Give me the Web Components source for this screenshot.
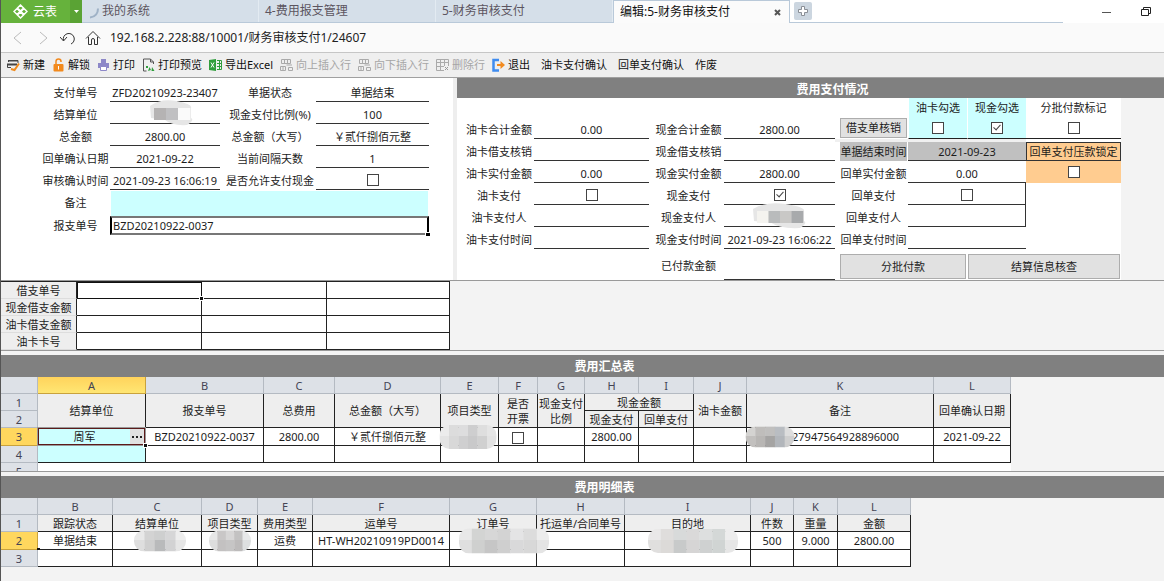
<!DOCTYPE html>
<html lang="zh-CN">
<head>
<meta charset="UTF-8">
<title>财务审核支付</title>
<style>
  body {
    margin: 0;
    min-height: 100vh;
    box-sizing: border-box;
    border-left: 1px solid #555;
    background: #f3f3f3;
    color: #1c1c1c;
    font: 11px/16px "Noto Sans", "Noto Sans CJK SC", sans-serif;
  }
</style>
</head>
<body>
<yb-app></yb-app>

<script>
// small helper, every element here renders once
class BaseElement extends HTMLElement {
  constructor() {
    super();
    this.attachShadow({ mode: 'open' });
  }
  connectedCallback() {
    this.shadowRoot.innerHTML = this.render();
  }
}

const checkboxCss = `
  input[type=checkbox] {
    appearance: none;
    position: relative;
    flex: none;
    width: 12px;
    height: 12px;
    margin: 0;
    border: 1px solid #444;
    background: #fff;
  }
  input[type=checkbox]:checked::after {
    content: "";
    position: absolute;
    left: 3px;
    top: 0;
    width: 3px;
    height: 6px;
    border: solid #444;
    border-width: 0 1px 1px 0;
    transform: rotate(42deg);
  }
`;

const buttonCss = `
  button {
    font: inherit;
    color: inherit;
    padding: 0;
    border: 0;
    background: none;
    white-space: nowrap;
  }
`;

const icons = {
  new: `<path d="M1.500 4V2.500h9.500V5M.5 9.500V6.500H10M.5 9.500H4" fill="none" stroke="#444"/><path d="M1 2h10v1.500H1zM0 5.500h10v2H0z" fill="#444"/><path d="M4 11l3.500 1L12 5.500" fill="none" stroke="#f08a1c" stroke-width="2"/>`,
  unlock: `<path d="M4 6V3.500a2.500 2.500 0 0 1 5 0V4" fill="none" stroke="#f28a1e" stroke-width="1.500"/><rect x="1.500" y="6" width="10" height="7.500" rx="1" fill="#f28a1e"/><path d="M6 8h1v3.500H6z" fill="#fff"/>`,
  print: `<path d="M4 1h5v4H4zM1 5h11v5H1z" fill="#8d88c8"/><path d="M3.500 8.500h6v4h-6z" fill="#fff" stroke="#8d88c8"/>`,
  preview: `<path d="M11.500 6V4l-3-3h-7v12h3" fill="none" stroke="#555"/><path d="M8.500 1v3h3" fill="none" stroke="#555"/><path d="M6 13l1.500-4 1.500 3zM10 9l2.500 4h-3zM4 8h2v2H4z" fill="#2f9e3c"/>`,
  excel: `<path d="M0 2l7-1v12l-7-1z" fill="#2f9e3c"/><path d="M2 4.500l3 5M5 4.500l-3 5" stroke="#fff" fill="none"/><path d="M8 2.500h4.500v9H8M10.500 3v8M8 5.500h4M8 8.500h4" stroke="#2f9e3c" fill="none"/>`,
  up: `<path d="M1.500 1.500h9v4h-9zM4.500 1v4M7.500 1v4M.5 8.500h5v4h-5zM3 8v4M6.500 7H12M8.500 9.500h4v3h-4z" fill="none" stroke="#aaa"/>`,
  down: `<path d="M1.500 1.500h9v4h-9zM4.500 1v4M7.500 1v4M.5 8.500h5v4h-5zM3 8v4M6.500 7H12M8.500 9.500h4v3h-4z" fill="none" stroke="#aaa"/>`,
  del: `<path d="M.5 1.500h12v11H.5zM.5 4.500h12M.5 8.500h12M4.500 1.500v11M8.500 1.500v11" fill="none" stroke="#aaa"/><path d="M8 8h5v5H8z" fill="#efefef"/><path d="M9 9l3 3M12 9l-3 3" stroke="#999"/>`,
  exit: `<path d="M7 2H1.500v10.500H7" fill="none" stroke="#3f8cf0" stroke-width="2.500"/><path d="M5 6h3.500V3l4.500 4-4.500 4V8H5z" fill="#f28a1e"/>`
};

class TabStrip extends BaseElement {
  render() {
    return `
      <style>
        :host { display: flex; height: 23px; background: #fff; font-size: 12px; }
        ${buttonCss}
        .logo {
          display: flex; align-items: center; gap: 5px; box-sizing: border-box; width: 69px; padding-left: 12px;
          background: #66b23c; color: #fff;
        }
        .drop { width: 12px; background: #5aa334; color: #fff; display: flex; align-items: center; justify-content: center; }
        nav { display: flex; flex: 0 1 981px; border-bottom: 1px solid #b9c9d9; }
        .tab {
          display: flex; align-items: center; flex: 0 1 177px; box-sizing: border-box; padding: 0 8px 0 6px;
          border-right: 1px solid #e3ebf2; background: #d5dfe9; color: #5c5560; text-decoration: none; white-space: nowrap;
        }
        .tab:first-child { gap: 2px; }
        .tab.active {
          justify-content: space-between; margin-bottom: -1px; background: #fbfbfb; color: #111;
          border: 1px solid #b9c9d9; border-bottom: 0;
        }
        .add {
          display: flex; align-items: center; justify-content: center; width: 18px; height: 18px; margin: 2px 4px;
          border-radius: 2px; background: #ccd6e0;
        }
        .window { display: flex; gap: 30px; align-items: center; margin-left: auto; padding-right: 13px; }
        svg { display: block; }
      </style>
      <button class="logo"><svg width="15" height="15" viewBox="0 0 15 15" fill="none" stroke="#fff" stroke-width="1.500"><path d="M7.500 1l3 3-3 3-3-3zM7.500 8l3 3-3 3-3-3zM4 4.500l3 3-3 3-3-3zM11 4.500l3 3-3 3-3-3z"/></svg>云表</button>
      <button class="drop" aria-label="菜单"><svg width="5" height="3"><path d="M0 0h5L2.500 3z" fill="#fff"/></svg></button>
      <nav>
        <a class="tab" href="#"><svg width="12" height="16" viewBox="0 0 12 16"><path d="M2 14.500q8-1 8-9" fill="none" stroke="#9fb2c6" stroke-width="2"/></svg>我的系统</a>
        <a class="tab" href="#">4-费用报支管理</a>
        <a class="tab" href="#">5-财务审核支付</a>
        <a class="tab active" href="#">编辑:5-财务审核支付
          <svg width="7" height="7" viewBox="0 0 7 7"><path d="M1 1l5 5M6 1L1 6" stroke="#555" stroke-width="2"/></svg>
        </a>
        <button class="add" aria-label="新标签页"><svg width="10" height="10" viewBox="0 0 10 10"><path d="M3.500.5h3v3h3v3h-3v3h-3v-3h-3v-3h3z" fill="#fff" stroke="#8a8f96"/></svg></button>
      </nav>
      <div class="window">
        <button aria-label="最小化"><svg width="9" height="10"><path d="M0 5.500h9" stroke="#555"/></svg></button>
        <button aria-label="还原"><svg width="10" height="10" viewBox="0 0 10 10"><path d="M.5 2.500h7v6h-7zM2.500 2V.5h7v6H8" fill="none" stroke="#222"/></svg></button>
      </div>`;
  }
}

class AddressBar extends BaseElement {
  render() {
    return `
      <style>
        :host { display: flex; align-items: center; height: 29px; padding-left: 9px; border-bottom: 1px solid #c6c6c6; background: #fafafa; }
        ${buttonCss}
        button { display: flex; width: 16px; margin-right: 9px; justify-content: center; }
        svg { display: block; }
        input { flex: 1; min-width: 0; padding: 0; border: 0; outline: 0; background: none; color: #222; font: inherit; font-size: 12px; }
      </style>
      <button aria-label="后退"><svg width="16" height="16" fill="none" stroke="#bbb"><path d="M11 2L4 8l7 6"/></svg></button>
      <button aria-label="前进"><svg width="16" height="16" fill="none" stroke="#bbb"><path d="M5 2l7 6-7 6"/></svg></button>
      <button aria-label="刷新"><svg width="16" height="16" fill="none" stroke="#333"><path d="M0 7l3.500 4L7 7M3.500 10.500a5.500 5.500 0 1 1 7.500 3.500"/></svg></button>
      <button aria-label="主页"><svg width="16" height="16" fill="none" stroke="#333"><path d="M1 8.500L8 1.500l7 7M3.500 7v7.500h3V10a1.500 1.500 0 0 1 3 0v4.500h3V7"/></svg></button>
      <input aria-label="地址" value="192.168.2.228:88/10001/财务审核支付1/24607">`;
  }
}

class ToolButton extends BaseElement {
  render() {
    const icon = icons[this.getAttribute('icon')];
    return `
      <style>
        :host { display: flex; }
        ${buttonCss}
        button { display: flex; align-items: center; gap: 3px; color: #111; }
        button:disabled { color: #a6a6a6; }
        :host(:not([icon])) button { margin-left: 4px; }
      </style>
      <button ${this.hasAttribute('disabled') ? 'disabled' : ''}>${icon ? `<svg width="13" height="14" viewBox="0 0 13 14">${icon}</svg>` : ''}<slot></slot></button>`;
  }
}

class SectionTitle extends BaseElement {
  render() {
    return `
      <style>
        :host {
          display: block; height: var(--title-height, 22px); padding-left: 44px; background: #808080; color: #fff;
          font-size: 12px; font-weight: 700; line-height: 23px; text-align: center;
        }
      </style>
      <slot></slot>`;
  }
}

// mosaic patch over private data: tones are the colours of its blocks, left to right
class PixelMask extends BaseElement {
  render() {
    const w = +this.getAttribute('w');
    const h = +this.getAttribute('h');
    const tones = this.getAttribute('tones').split(' ');
    // a brushed mask is blocks all over, otherwise they sit in a band across a pale blob
    const full = this.hasAttribute('full');
    const inset = full ? 0 : 5;
    const top = full ? 0 : 8;
    const step = (w - inset * 2) / tones.length;
    const blocks = tones.map((tone, i) => `
      <rect x="${inset + i * step}" y="${top}" width="${step + 0.3}" height="${full ? h : 12}" fill="#${tone}"/>
      ${full ? `<rect x="${inset + i * step}" y="0" width="${step + 0.3}" height="${h / 2 - 1}" fill="#fff" opacity="${i % 2 ? 0.1 : 0.3}"/>` : ''}`).join('');
    const blob = full ? '' : `<path d="M1 6Q${w * 0.25}-2 ${w * 0.6} 1T${w - 4} 8V18Q${w} 20 ${w - 8} ${h - 1}Q${w * 0.5} ${h} ${w * 0.35} 20L2 18z" fill="#e6e6e6"/>`;
    return `
      <style>
        :host { position: absolute; z-index: 1; left: calc(50% + ${this.getAttribute('dx') || 0}px); top: 50%; transform: translate(-50%, -50%); }
        svg { display: block; }
        :host([full]) svg { border-radius: 10px; }
      </style>
      <svg width="${w}" height="${h}">${blob}${blocks}</svg>`;
  }
}

class FormField extends BaseElement {
  render() {
    const value = this.getAttribute('value') || '';
    const control = this.hasAttribute('check')
      ? `<input id="f" type="checkbox" ${this.getAttribute('check') === 'on' ? 'checked' : ''}>`
      : `<input id="f" class="text" value="${value}">`;
    return `
      <style>
        :host { display: grid; grid-template-columns: subgrid; grid-column: span 2; }
        label { display: flex; align-items: center; justify-content: center; padding: 3px 0 0 4px; white-space: nowrap; }
        .value {
          position: relative; grid-column: 2 / -1; display: flex; align-items: center; justify-content: center;
          padding-top: 3px; border-bottom: 1px solid #333;
        }
        .text {
          box-sizing: border-box; width: 100%; height: 100%; min-width: 0; padding: 0 2px; border: 0; outline: 0;
          background: none; color: inherit; font: inherit; text-align: center;
        }
        ${checkboxCss}
        :host([wide]) { grid-column: span 4; }
        :host([wide]) label { padding-top: 0; }
        :host([fill]) .value { margin: 1px 1px 0; padding: 0; border: 0; background: #ccffff; }
        :host([current]) .value { padding: 0; border: 2px solid #777; border-color: #777 #000; }
        :host([current]) .value::after { content: ""; position: absolute; right: -3px; bottom: -3px; width: 4px; height: 3px; background: #000; border: solid #fff; border-width: 1px 0 0 1px; }
        :host([current]) .text { text-align: left; padding: 0 1px; }
        :host([gray]) { border-top: 3px solid #f0f0f0; }
        :host([gray]) label { margin: 0 1px 0 5px; padding: 0; background: #c0c0c0; }
        :host([gray]) .value { padding: 0; background: #c0c0c0; }
        :host([boxed]) .value { border-right: 1px solid #333; }
      </style>
      <label for="f">${this.getAttribute('label')}</label>
      <div class="value">${control}<slot></slot></div>`;
  }
}

class CheckColumn extends BaseElement {
  render() {
    return `
      <style>
        :host { display: grid; grid-template-rows: 19px 22px; align-content: end; }
        label, div { display: flex; align-items: center; justify-content: center; white-space: nowrap; }
        div { border-bottom: 1px solid #222; }
        ${checkboxCss}
        :host([cyan]) label, :host([cyan]) div { background: #ccffff; border-left: 1px solid #fff; }
        :host([orange]) label { background: #ffcc90; border: 1px solid #333; box-sizing: border-box; }
        :host([orange]) div { background: #ffcc90; border: 0; }
      </style>
      <label for="c">${this.getAttribute('label')}</label>
      <div><input id="c" type="checkbox" ${this.hasAttribute('checked') ? 'checked' : ''}></div>`;
  }
}

class PushButton extends BaseElement {
  render() {
    return `
      <style>
        :host { display: flex; }
        ${buttonCss}
        button { flex: 1; background: #e1e1e1; border: 1px solid #adadad; }
      </style>
      <button><slot></slot></button>`;
  }
}

class BillForm extends BaseElement {
  render() {
    return `
      <style>
        :host {
          display: grid; flex: 0 0 416px; box-sizing: content-box; padding: 2px 0 0 36px; align-content: start;
          grid-template-columns: 73px 110px 96px 113px; grid-template-rows: repeat(5, 22px) 26px 18px; background: #fff;
        }
      </style>
      <form-field label="支付单号" value="ZFD20210923-23407"></form-field>
      <form-field label="单据状态" value="单据结束"></form-field>
      <form-field label="结算单位"><pixel-mask w="46" h="26" dx="7" tones="b5b3b3 c0c0c2 fafafa"></pixel-mask></form-field>
      <form-field label="现金支付比例(%)" value="100"></form-field>
      <form-field label="总金额" value="2800.00"></form-field>
      <form-field label="总金额（大写）" value="￥贰仟捌佰元整"></form-field>
      <form-field label="回单确认日期" value="2021-09-22"></form-field>
      <form-field label="当前间隔天数" value="1"></form-field>
      <form-field label="审核确认时间" value="2021-09-23 16:06:19"></form-field>
      <form-field label="是否允许支付现金" check></form-field>
      <form-field label="备注" wide fill></form-field>
      <form-field label="报支单号" value="BZD20210922-0037" wide current></form-field>`;
  }
}

class PaymentForm extends BaseElement {
  render() {
    return `
      <style>
        :host { display: block; flex: 1; min-width: 0; border-left: 4px solid #eee; --title-height: 20px; }
        section {
          display: grid; width: max-content; padding-left: 3px; background: #fff;
          grid-template-columns: 74px 115px 75px 111px 73px 59px 59px 95px;
          grid-template-rows: 19px repeat(6, 22px) 31px;
        }
        .receipt { grid-column: 5 / 8; }
        .verify { margin: 1px 1px 1px 5px; }
        .batch { grid-area: 8 / 5 / 9 / 7; margin: 5px 1px 1px 5px; }
        .settle { grid-area: 8 / 7 / 9 / 9; margin: 5px 1px 1px 1px; }
      </style>
      <section-title>费用支付情况</section-title>
      <section>
        <check-column style="grid-area: 1 / 6 / 3 / 7" label="油卡勾选" cyan></check-column>
        <check-column style="grid-area: 1 / 7 / 3 / 8" label="现金勾选" cyan checked></check-column>
        <check-column style="grid-area: 1 / 8 / 3 / 9" label="分批付款标记"></check-column>
        <form-field style="grid-row: 2" label="油卡合计金额" value="0.00"></form-field>
        <form-field style="grid-row: 2" label="现金合计金额" value="2800.00"></form-field>
        <push-button style="grid-row: 2" class="verify">借支单核销</push-button>
        <form-field style="grid-row: 3" label="油卡借支核销"></form-field>
        <form-field style="grid-row: 3" label="现金借支核销"></form-field>
        <form-field style="grid-row: 3" class="receipt" label="单据结束时间" value="2021-09-23" gray></form-field>
        <check-column style="grid-area: 3 / 8 / 5 / 9" label="回单支付压款锁定" orange></check-column>
        <form-field style="grid-row: 4" label="油卡实付金额" value="0.00"></form-field>
        <form-field style="grid-row: 4" label="现金实付金额" value="2800.00"></form-field>
        <form-field style="grid-row: 4" class="receipt" label="回单实付金额" value="0.00"></form-field>
        <form-field style="grid-row: 5" label="油卡支付" check></form-field>
        <form-field style="grid-row: 5" label="现金支付" check="on"></form-field>
        <form-field style="grid-row: 5" class="receipt" label="回单支付" check boxed></form-field>
        <form-field style="grid-row: 6" label="油卡支付人"></form-field>
        <form-field style="grid-row: 6" label="现金支付人"><pixel-mask w="56" h="26" tones="f4f3ef b9bbbc c9c8c6 a8aaac"></pixel-mask></form-field>
        <form-field style="grid-row: 6" class="receipt" label="回单支付人" boxed></form-field>
        <form-field style="grid-row: 7" label="油卡支付时间"></form-field>
        <form-field style="grid-row: 7" label="现金支付时间" value="2021-09-23 16:06:22"></form-field>
        <form-field style="grid-row: 7" class="receipt" label="回单支付时间"></form-field>
        <form-field style="grid-area: 8 / 3 / 9 / 5" label="已付款金额"></form-field>
        <push-button class="batch">分批付款</push-button>
        <push-button class="settle">结算信息核查</push-button>
      </section>`;
  }
}

const gridCss = `
  table { table-layout: fixed; width: 0; border-collapse: separate; border-spacing: 0; }
  tr { height: 17px; }
  th, td {
    position: relative; box-sizing: border-box; padding: 0; border: solid #222; border-width: 0 1px 1px 0;
    background: #fff; font-weight: 400; line-height: 15px; text-align: center; white-space: nowrap;
  }
  th { background: #eee; }
  .letters th, th.num { background: #dde1e7; border-color: #b4bac2; color: #445; }
  .letters th { height: 17px; }
  tr.tall { height: 18px; }
  .letters th.on { background: linear-gradient(#ffd35c, #ffe673); border-color: #c9a23c; }
  th.num.on { background: #ffd75e; border-color: #c9a23c; }
`;

const cols = widths => `<colgroup>${widths.map(w => `<col style="width:${w}px">`).join('')}</colgroup>`;
const letters = (names, on) => `<tr class="letters"><th></th>${[...names].map(n => `<th${n === on ? ' class="on"' : ''}>${n}</th>`).join('')}</tr>`;
const blanks = n => '<td></td>'.repeat(n);

class LoanGrid extends BaseElement {
  render() {
    const rows = ['借支单号', '现金借支金额', '油卡借支金额', '油卡卡号'];
    return `
      <style>
        :host { display: block; border-bottom: 1px solid #999; }
        ${gridCss}
        table { border-top: 1px solid #222; }
        th { border-bottom-color: #ddd; }
        td.current { outline: 1px solid #111; outline-offset: -1px; }
        td.current::after { content: ""; position: absolute; z-index: 1; right: -3px; bottom: -3px; width: 3px; height: 3px; background: #111; border: 1px solid #fff; }
      </style>
      <table>
        ${cols([76, 125, 125, 123])}
        ${rows.map((name, i) => `<tr><th scope="row">${name}</th><td${i ? '' : ' class="current"'}></td>${blanks(2)}</tr>`).join('')}
      </table>`;
  }
}

class SummaryGrid extends BaseElement {
  render() {
    return `
      <style>
        :host { display: block; border-bottom: 1px solid #999; }
        ${gridCss}
        ${checkboxCss}
        ${buttonCss}
        input { vertical-align: middle; }
        .cyan { background: #ccffff; }
        .cell { display: flex; box-sizing: border-box; height: 17px; border: 1px solid #5c1a1a; outline: 1px solid #999; }
        .cell .text { flex: 1; min-width: 0; padding: 0; border: 0; outline: 0; background: none; color: inherit; font: inherit; text-align: center; }
        .cell button { width: 14px; background: #e1e1e1; }
        .cell svg { display: block; margin: auto; }
        .handle { position: absolute; z-index: 1; right: -3px; bottom: -3px; width: 3px; height: 3px; background: #111; border: 1px solid #fff; }
        .clip { overflow: hidden; height: 94px; background: linear-gradient(to right, #fff 1010px, transparent 0); }
        .clip tr:last-child td { border: 0; }
      </style>
      <section-title>费用汇总表</section-title>
      <div class="clip">
      <table>
        ${cols([37, 108, 118, 71, 106, 58, 39, 47, 54, 55, 53, 187, 77])}
        ${letters('ABCDEFGHIJKL', 'A')}
        <tr>
          <th class="num">1</th>
          <th rowspan="2">结算单位</th><th rowspan="2">报支单号</th><th rowspan="2">总费用</th><th rowspan="2">总金额（大写）</th>
          <th rowspan="2">项目类型</th><th rowspan="2">是否<br>开票</th><th rowspan="2">现金支付<br>比例</th>
          <th colspan="2">现金金额</th><th rowspan="2">油卡金额</th><th rowspan="2">备注</th><th rowspan="2">回单确认日期</th>
        </tr>
        <tr><th class="num">2</th><th>现金支付</th><th>回单支付</th></tr>
        <tr class="tall">
          <th class="num on">3</th>
          <td class="cyan"><div class="cell"><input class="text" aria-label="结算单位" value="周军"><button aria-label="选择"><svg width="10" height="2"><path d="M0 0h2v2H0zM4 0h2v2H4zM8 0h2v2H8z" fill="#222"/></svg></button></div><span class="handle"></span></td>
          <td>BZD20210922-0037</td><td>2800.00</td><td>￥贰仟捌佰元整</td>
          <td><pixel-mask full w="57" h="24" dx="-2" tones="e4e4e4 d8d8d8 cfcfd0 c9c9ca d0d0d0 e2e2e2"></pixel-mask></td>
          <td><input type="checkbox" aria-label="是否开票"></td><td></td><td>2800.00</td>${blanks(2)}
          <td><pixel-mask full w="49" h="21" dx="-70" tones="c2c0be b8b6b4 a5a4a3 b2b6bb cfcfcf"></pixel-mask>&emsp;27947564928896000</td>
          <td>2021-09-22</td>
        </tr>
        <tr><th class="num">4</th><td class="cyan"></td>${blanks(11)}</tr>
        <tr><th class="num">5</th>${blanks(12)}</tr>
      </table>
      </div>`;
  }
}

class DetailGrid extends BaseElement {
  render() {
    return `
      <style>
        :host { display: block; }
        ${gridCss}
        td.first::before { content: ""; position: absolute; left: -1px; bottom: -2px; width: 3px; height: 3px; background: #111; }
      </style>
      <section-title>费用明细表</section-title>
      <table>
        ${cols([37, 75, 89, 56, 55, 137, 87, 88, 126, 43, 44, 73])}
        ${letters('BCDEFGHIJKL')}
        <tr><th class="num">1</th>${['跟踪状态', '结算单位', '项目类型', '费用类型', '运单号', '订单号', '托运单/合同单号', '目的地', '件数', '重量', '金额'].map(t => `<th>${t}</th>`).join('')}</tr>
        <tr class="tall">
          <th class="num on">2</th><td class="first">单据结束</td>
          <td><pixel-mask full w="52" h="21" dx="3" tones="dedede cfcfcf b9babb d2d2d3 e6e6e6"></pixel-mask></td>
          <td><pixel-mask full w="42" h="21" tones="dddddd c3c1c1 c6c5c5 bdbbbb dddfe0"></pixel-mask></td>
          <td>运费</td><td>HT-WH20210919PD0014</td>
          <td><pixel-mask full w="90" h="25" dx="11" tones="dfdfdf cfd0cf c6c6c6 cfcfcf d9d9da d8d8d8 e4e4e4"></pixel-mask></td>
          <td></td>
          <td><pixel-mask full w="90" h="24" dx="5" tones="e0dfde dcdad8 c8caca d6d5d5 cfd1d1 d0d4d3 e6e6e6"></pixel-mask></td>
          <td>500</td><td>9.000</td><td>2800.00</td>
        </tr>
        <tr><th class="num">3</th>${blanks(11)}</tr>
      </table>`;
  }
}

class YbApp extends BaseElement {
  render() {
    return `
      <style>
        :host { display: block; }
        .toolbar { display: flex; align-items: center; gap: 7px; height: 24px; padding-left: 6px; border-bottom: 1px solid #a0a0a0; background: #efefef; }
        .top { display: flex; border-bottom: 1px solid #999; }
        main { display: grid; gap: 4px; }
      </style>
      <tab-strip></tab-strip>
      <address-bar></address-bar>
      <div class="toolbar">
        <tool-button icon="new">新建</tool-button>
        <tool-button icon="unlock">解锁</tool-button>
        <tool-button icon="print">打印</tool-button>
        <tool-button icon="preview">打印预览</tool-button>
        <tool-button icon="excel">导出Excel</tool-button>
        <tool-button icon="up" disabled>向上插入行</tool-button>
        <tool-button icon="down" disabled>向下插入行</tool-button>
        <tool-button icon="del" disabled>删除行</tool-button>
        <tool-button icon="exit">退出</tool-button>
        <tool-button>油卡支付确认</tool-button>
        <tool-button>回单支付确认</tool-button>
        <tool-button>作废</tool-button>
      </div>
      <div class="top">
        <bill-form></bill-form>
        <payment-form></payment-form>
      </div>
      <main>
        <loan-grid></loan-grid>
        <summary-grid></summary-grid>
        <detail-grid></detail-grid>
      </main>`;
  }
}

customElements.define('tab-strip', TabStrip);
customElements.define('address-bar', AddressBar);
customElements.define('tool-button', ToolButton);
customElements.define('section-title', SectionTitle);
customElements.define('pixel-mask', PixelMask);
customElements.define('form-field', FormField);
customElements.define('check-column', CheckColumn);
customElements.define('push-button', PushButton);
customElements.define('bill-form', BillForm);
customElements.define('payment-form', PaymentForm);
customElements.define('loan-grid', LoanGrid);
customElements.define('summary-grid', SummaryGrid);
customElements.define('detail-grid', DetailGrid);
customElements.define('yb-app', YbApp);
</script>
</body>
</html>
